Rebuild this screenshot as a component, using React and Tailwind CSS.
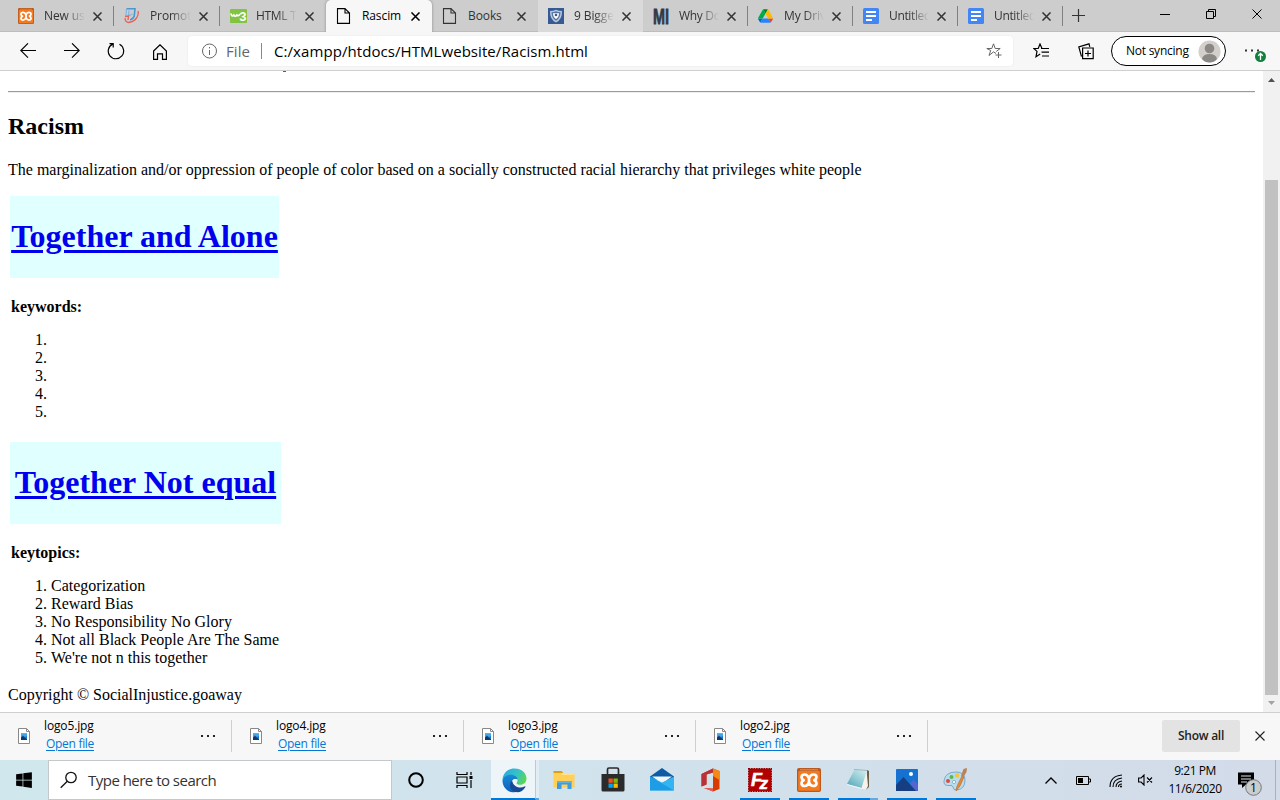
import React from "react";
import { FaWindows } from "react-icons/fa";

const Close = ({ s = 9, w = 1.5, c = "#333" }) => (
  <svg width={s} height={s} viewBox="0 0 10 10" fill="none" stroke={c} strokeWidth={w}>
    <path d="M.5.5l9 9M9.5.5l-9 9" />
  </svg>
);

const PageIcon = ({ c = "#333" }) => (
  <svg width="16" height="16" viewBox="0 0 16 16" fill="none" stroke={c} strokeWidth="1.1">
    <path d="M1.500.6h7.500L13.500 5v10.400h-12zM9 .6V5h4.500" />
  </svg>
);

const Xampp = ({ size }) => (
  <svg width={size} height={size} viewBox="0 0 24 24">
    <rect width="24" height="24" rx="2" fill="#b9591f" />
    <rect x="1.2" y="3" width="21.6" height="19.800" rx="1" fill="#f47a20" />
    <rect x="3" y="1.200" width="18" height="1.200" fill="#d98a58" />
    <path d="M7.800 6.500Q10.500 6.500 12 10.200Q13.500 6.500 16.200 6.500Q19.500 6.500 19.500 9.200Q19.500 11 17.300 12.200Q19.500 13.400 19.500 15.200Q19.500 18 16.200 18Q13.500 18 12 14.200Q10.500 18 7.800 18Q4.500 18 4.500 15.200Q4.500 13.400 6.700 12.200Q4.500 11 4.500 9.200Q4.500 6.500 7.800 6.500zM12 10.200v4" fill="none" stroke="#fff" strokeWidth="2.700" strokeLinejoin="round" />
  </svg>
);

const Promo = () => (
  <svg width="16" height="16" viewBox="0 0 16 16" fill="none">
    <path d="M2.500.8h8.500l-.8 7.500q-.5 2-4 3.700" stroke="#4a97d2" strokeWidth="1.600" />
    <path d="M2.500.8L2 8M5 2.500L4.500 8l4-2" stroke="#7fb6df" strokeWidth="1.200" />
    <path d="M1 10q0 4 3.500 4.500 5-.5 8-4.500 2.500-4 1.500-7M1 8.500l3.500-.5L4 12" stroke="#e8605a" strokeWidth="1.300" />
  </svg>
);

const W3 = () => (
  <svg width="17" height="14" viewBox="0 0 17 14">
    <rect width="17" height="14" rx="1" fill="#82c341" />
    <path d="M.8 4.500q1.200 4 3 1.500 1.300 2.500 3 0 1 1.800 3.200-.800" fill="none" stroke="#fff" strokeWidth="1.700" />
    <text x="9.300" y="11.800" fontFamily="Liberation Sans, sans-serif" fontWeight="700" fontSize="13" fill="#fff">3</text>
  </svg>
);

const Shield = () => (
  <svg width="16" height="16" viewBox="0 0 16 16">
    <rect width="16" height="16" fill="#365a94" />
    <path d="M2 3q3.500 0 6-1.300Q10.500 3 14 3q.3 8.500-6 11.500Q1.700 11.500 2 3z" fill="#b9c8dc" />
    <path d="M3.500 4.300q2.500 0 4.500-1 2 1 4.500 1 0 6-4.500 8.400Q3.500 10.300 3.500 4.300z" fill="#58749f" />
    <path d="M5 5.300h6q0 4-3 5.700-3-1.700-3-5.700z" fill="#fff" />
    <circle cx="8" cy="7" r="1.300" fill="#365a94" />
  </svg>
);

const Mi = () => (
  <svg className="overflow-visible" width="17" height="16" viewBox="0 0 17 16">
    <text x="0" y="15.500" textLength="16" lengthAdjust="spacingAndGlyphs" fontFamily="Liberation Sans Narrow, Liberation Sans, sans-serif" fontWeight="700" fontSize="21.500" fill="#303a49" stroke="#303a49" strokeWidth=".8">MI</text>
  </svg>
);

const Drive = () => (
  <svg width="15" height="14" viewBox="0 0 87.3 78">
    <path d="M6.600 66.850l3.850 6.650c.8 1.400 1.950 2.500 3.300 3.300l13.750-23.800H0c0 1.550.4 3.100 1.200 4.500z" fill="#0066da" />
    <path d="M43.650 25L29.900 1.200c-1.350.8-2.500 1.900-3.300 3.300L1.200 48.500A9 9 0 0 0 0 53h27.500z" fill="#00ac47" />
    <path d="M73.550 76.800c1.350-.8 2.500-1.900 3.300-3.300l1.600-2.750 7.650-13.250c.8-1.400 1.200-2.950 1.200-4.500H59.800l5.850 11.500z" fill="#ea4335" />
    <path d="M43.650 25L57.400 1.200C56.050.4 54.500 0 52.900 0H34.400c-1.600 0-3.150.45-4.500 1.200z" fill="#00832d" />
    <path d="M59.800 53H27.500L13.750 76.800c1.350.8 2.900 1.200 4.500 1.200h50.800c1.600 0 3.150-.45 4.500-1.200z" fill="#2684fc" />
    <path d="M73.400 26.500l-12.700-22c-.8-1.400-1.950-2.500-3.300-3.300L43.650 25 59.800 53h27.450c0-1.550-.4-3.100-1.200-4.500z" fill="#ffba00" />
  </svg>
);

const Docs = () => (
  <svg width="16" height="16" viewBox="0 0 16 16">
    <rect width="16" height="16" rx="1.500" fill="#4285f4" />
    <path d="M3 4h10M3 8h10M3 12h6" stroke="#fff" strokeWidth="1.800" />
  </svg>
);

const tabs = [
  { t: "New us", i: <Xampp size={16} />, fade: true, sep: true },
  { t: "Promot", i: <Promo />, fade: true, sep: true },
  { t: "HTML T", i: <W3 />, fade: true },
  { t: "Rascim", i: <PageIcon c="#000" />, active: true },
  { t: "Books", i: <PageIcon /> },
  { t: "9 Bigge", i: <Shield />, fade: true, hover: true },
  { t: "Why Do", i: <Mi />, fade: true, sep: true },
  { t: "My Driv", i: <Drive />, fade: true, sep: true },
  { t: "Untitled", i: <Docs />, fade: true, sep: true },
  { t: "Untitled", i: <Docs />, fade: true, sep: true },
];

function Tab({ tab, wide }) {
  const bg = tab.active ? "bg-[#f7f7f7] rounded-t-[5px] shadow-[0_0_3px_rgba(0,0,0,0.35)] z-10 text-black" : tab.hover ? "bg-[#dadada] text-[#333]" : "text-[#333]";
  return (
    <div className={"relative flex h-8 shrink-0 items-center pl-[10px] " + (wide ? "w-[106px] " : "w-[105px] ") + bg}>
      <span className="flex w-[26px] shrink-0 items-center">{tab.i}</span>
      <span className={"whitespace-nowrap text-[12px] leading-4 " + (wide ? "w-[41px] " : "w-[40px] ") + (tab.t === "Untitled" ? "tracking-[-0.350px] " : tab.t === "HTML T" || tab.t === "Why Do" ? "tracking-[-0.300px] " : "tracking-[-0.100px] ") + (tab.fade ? "[mask-image:linear-gradient(to_right,black_50%,transparent_100%)]" : "")}>{tab.t}</span>
      <span className="ml-[8px] flex"><Close s={9} w={1.700} c={tab.active ? "#000" : "#333"} /></span>
      <span className={"ml-auto h-5 w-px " + (tab.sep ? "bg-[#808080]" : "")} />
    </div>
  );
}

function Tabs() {
  return (
    <div className="flex h-8 shrink-0 items-start overflow-hidden bg-[#cdcdcd] pl-2 shadow-[inset_0_-1px_0_#bdbdbd]">
      {tabs.map((t, i) => <Tab key={i} tab={t} wide={i < 5} />)}
      <svg className="ml-[9px] mt-[9px]" width="13" height="13" viewBox="0 0 13 13" stroke="#333" strokeWidth="1.200"><path d="M0 6.500h13M6.500 0v13" /></svg>
      <svg className="ml-[75px] mt-[14px]" width="10" height="1"><rect width="10" height="1" fill="#000" /></svg>
      <svg className="ml-[36px] mt-[9px]" width="10" height="10" viewBox="0 0 10 10" fill="none" stroke="#000"><path d="M.5 2.500h7v7h-7zM2.500 2.500v-2h7v7h-2" /></svg>
      <span className="ml-[36px] mt-[9px]"><Close s={10} w={1} c="#000" /></span>
    </div>
  );
}

function Toolbar() {
  return (
    <div className="flex h-[39px] shrink-0 items-center border-b border-[#cfcfcf] bg-[#f7f7f7]">
      <svg className="ml-5" width="16" height="16" viewBox="0 0 16 16" fill="none" stroke="#000" strokeWidth="1.100"><path d="M16 7.500H.8M8 .3L.8 7.500 8 14.700" /></svg>
      <svg className="ml-[28px]" width="16" height="16" viewBox="0 0 16 16" fill="none" stroke="#000" strokeWidth="1.100"><path d="M0 7.500h15.200M8 .3l7.200 7.200L8 14.700" /></svg>
      <svg className="ml-[27px]" width="18" height="18" viewBox="0 0 18 18" fill="none" stroke="#000" strokeWidth="1.200"><path d="M12.500 2.200A7.700 7.700 0 1 1 5.600 2.100M2.500 1.600h3.700v3.900" /></svg>
      <svg className="ml-[28px] mt-px" width="14" height="16" viewBox="0 0 14 16" fill="none" stroke="#000" strokeWidth="1.200"><path d="M.6 7L7 .8 13.400 7v8.400H9.500v-5.600h-5v5.600H.6z" /></svg>
      <div className="ml-[21px] flex h-[30px] w-[825px] items-center rounded-[4px] bg-white pl-[14px] shadow-[0_0_2px_rgba(0,0,0,0.08)]">
        <svg className="-mt-px" width="16" height="16" viewBox="0 0 16 16" fill="none" stroke="#666"><circle cx="7.500" cy="8" r="7" /><path d="M7.500 7v5M7.500 4v1.400" /></svg>
        <span className="ml-2 w-[35px] text-[15px] text-[#666] tracking-[0.100px]">File</span>
        <span className="h-4 w-px bg-[#888]" />
        <span className="ml-[12px] w-[320px] whitespace-nowrap text-[15px] tracking-[0.070px] text-black">C:/xampp/htdocs/HTMLwebsite/Racism.html</span>
        <svg className="ml-auto mr-[10px]" width="17" height="16" viewBox="0 0 17 16" fill="none" stroke="#666"><path d="M10 10.500l-2.500-1.600L3 12.500l1.700-5L.8 5.500h5L7.500.8l1.700 4.700h5l-4 3M12.500 9v6M9.500 12h6" /></svg>
      </div>
      <svg className="ml-[20px]" width="17" height="16" viewBox="0 0 17 16" fill="none" stroke="#000" strokeWidth="1.200"><path d="M9 5.500L7 1 5.200 5.500H.8L4 8.400 3 13.700l4.200-2.600M8 5.500h8M8.500 9.200h7.500M9 13h7" /></svg>
      <svg className="ml-[28px]" width="16" height="17" viewBox="0 0 16 17" fill="none" stroke="#000" strokeWidth="1.200"><path d="M4.600 5h10.600v10.600H4.600zM10 7.500v6M7 10.500h6M3.500 13.500L.8 3.800 11 .8l.8 3" /></svg>
      <div className="ml-[17px] flex h-[30px] w-[115px] items-center rounded-full border border-black bg-white pl-[14px]">
        <span className="w-[72px] whitespace-nowrap text-[12px] tracking-[-0.250px] text-black">Not syncing</span>
        <svg className="shrink-0" width="23" height="23" viewBox="0 0 23 23"><circle cx="11.500" cy="11.500" r="11" fill="#d3d0cc" /><circle cx="11.500" cy="8.500" r="4.800" fill="#8b8785" /><path d="M4 19q1-5 7.500-5t7.500 5q-3 3.500-7.500 3.500T4 19z" fill="#8b8785" /></svg>
      </div>
      <svg className="ml-[18px]" width="23" height="24" viewBox="0 0 23 24"><path d="M1 10.500h2v2H1zM7 10.500h2v2H7zM13 10.500h2v2h-2z" fill="#333" /><circle cx="16.500" cy="17.500" r="5.500" fill="#15803d" /><path d="M16.500 21v-6.300M14.200 16.700l2.300-2.200 2.300 2.200" stroke="#fff" strokeWidth="1.300" fill="none" /></svg>
    </div>
  );
}

function Topic({ title, label, items, wide }) {
  return (
    <section className="ml-[2px]">
      <div className={"flex h-[82px] justify-center bg-[#e0ffff] pt-[22px] " + (wide ? "w-[271px]" : "w-[269px]")}>
        <h1 className="whitespace-nowrap text-[32px] leading-[37px] font-bold text-[#0000ee] underline decoration-[3px] underline-offset-[3px]">{title}</h1>
      </div>
      <p className="mt-5 mb-[15px] ml-px leading-[18px] font-bold">{label}</p>
      <ol className="ml-[41px] list-decimal leading-[18px]">
        {items.map((t, i) => <li key={i} className="h-[18px]">{t}</li>)}
      </ol>
    </section>
  );
}

function Page() {
  return (
    <div className="flex h-[641px] shrink-0 overflow-hidden bg-white">
      <main className="w-[1263px] pl-2 text-[16px] text-black [font-family:'Liberation_Serif',serif]">
        <div className="ml-[275px] h-px w-[3px] bg-[#6a4c93]" />
        <hr className="mt-[19px] h-[2px] w-[1247px] border-t border-b border-t-[#9a9a9a] border-b-[#eeeeee]" />
        <h2 className="mt-[19px] text-[24px] leading-[28px] font-bold">Racism</h2>
        <p className="mt-[21px] mb-[17px] whitespace-nowrap leading-[18px]">The marginalization and/or oppression of people of color based on a socially constructed racial hierarchy that privileges white people</p>
        <Topic title="Together and Alone" label="keywords:" items={["", "", "", "", ""]} />
        <div className="h-[21px]" />
        <Topic wide title="Together Not equal" label="keytopics:" items={["Categorization", "Reward Bias", "No Responsibility No Glory", "Not all Black People Are The Same", "We're not n this together"]} />
        <p className="mt-[19px] leading-[18px]">Copyright © SocialInjustice.goaway</p>
      </main>
      <div className="flex w-[17px] flex-col items-center bg-[#f1f1f1]">
        <svg className="mt-[7px]" width="7" height="4"><path d="M0 4h7L3.500 0z" fill="#505050" /></svg>
        <div className="mt-[98px] h-[515px] w-[13px] bg-[#c1c1c1]" />
        <svg className="mt-[6px]" width="7" height="4"><path d="M0 0h7L3.500 4z" fill="#a3a3a3" /></svg>
      </div>
    </div>
  );
}

function Download({ name }) {
  return (
    <div className="flex h-full w-[232px] items-center pl-[18px]">
      <svg className="-mt-px" width="12" height="16" viewBox="0 0 12 16"><path d="M.5.5h8l3 3v12H.5z" fill="#fff" stroke="#888" /><path d="M8.500.5v3h3" fill="none" stroke="#888" /><path d="M3 5.500h6V12H3z" fill="#1976c9" /><path d="M3 12V9.500L5 8l4 3.500v.5z" fill="#12366d" /><path d="M3 5.500h6V8L7 9 5 7.500 3 9z" fill="#43a5e8" /></svg>
      <div className="ml-[14px] flex h-full w-[120px] flex-col pt-[4px] text-[12px]">
        <span className="leading-[18px] tracking-[-0.140px] text-black">{name}</span>
        <span className="ml-[2px] leading-[18px] tracking-[-0.300px] text-[#0078d7] underline underline-offset-2">Open file</span>
      </div>
      <svg className="-mt-px ml-[37px]" width="14" height="2" fill="#222"><path d="M0 0h2v2H0zM6 0h2v2H6zM12 0h2v2h-2z" /></svg>
      <span className="-mt-px ml-auto h-8 w-px bg-[#cfcfcf]" />
    </div>
  );
}

function Downloads() {
  return (
    <div className="flex h-12 shrink-0 items-center border-t border-[#cfcfcf] bg-[#f7f7f7]">
      {["logo5.jpg", "logo4.jpg", "logo3.jpg", "logo2.jpg"].map((n) => <Download key={n} name={n} />)}
      <div className="-mt-px ml-auto flex h-8 w-[78px] items-center justify-center rounded-[2px] bg-[#e3e3e3] text-[12px] font-semibold tracking-[-0.250px] text-[#222]">Show all</div>
      <span className="-mt-px mr-[15px] ml-[15px] flex"><Close s={10} w={1.100} c="#222" /></span>
    </div>
  );
}

const Edge = () => (
  <svg width="25" height="25" viewBox="0 0 26 26">
    <defs>
      <linearGradient id="eg" x1="0" x2="1" y1=".2" y2=".6"><stop stopColor="#2aa8e0" /><stop offset=".55" stopColor="#35c1c9" /><stop offset="1" stopColor="#5bd84f" /></linearGradient>
      <linearGradient id="eb" x1="0" x2="0" y1="0" y2="1"><stop stopColor="#168bd6" /><stop offset="1" stopColor="#0b5fbc" /></linearGradient>
    </defs>
    <path d="M.5 12.500C1 5 6 .5 13 .5c7.500 0 12.500 5 12.500 10.500 0 4-3 6.500-6.500 6.500-3 0-5-1-3.800-2.500C17 12 14 8.500 9 8.500c-4 0-7 1.500-8.500 4z" fill="url(#eg)" />
    <path d="M.5 13C1.500 9.500 5 7 9 7c4.500 0 7 2.500 7.300 5-2.500-1.300-4.500-.5-5.500 1-1.800 2.800-.8 7 2.200 9.500 1.500 1.300 3 1.800 4 2C9 27.500.5 22 .5 13z" fill="url(#eb)" />
    <path d="M10.800 13c-3.300 2-3.500 7.500.2 10.500 4.500 3.300 10.500 1.500 13.200-3.500.5-.8-.2-1.200-.8-.8-3 1.700-7.400 1.500-10-1-1.800-1.500-2.600-3.200-2.600-5.200z" fill="#174a96" />
    <path d="M10.800 13.200c1.200-1.800 3.200-2.200 5.400-1.200.2 1.200-.2 2.200-1 3-.8 1 .2 2 2 2.400-2.500 1.200-5 .5-6.400-4.200z" fill="#edf5f9" />
  </svg>
);

const Folder = () => (
  <svg width="22" height="20" viewBox="0 0 22 20"><path d="M.5 1h8l2 2H.5z" fill="#dba114" /><path d="M.5 3h21v14.500H.5z" fill="#ffcf58" /><path d="M9 3h12.500v2H8z" fill="#ffe08c" /><path d="M4 19v-8h14.500v8h-4v-4.500h-6V19z" fill="#3d9be0" /><path d="M4 11h14.500v2H4z" fill="#5cb1ea" /></svg>
);
const Store = () => (
  <svg className="-mt-px" width="24" height="25" viewBox="0 0 24 25"><path d="M6.500 8V2.500q0-1.500 1.500-1.500h8q1.500 0 1.500 1.500V8" fill="none" stroke="#2b2b2b" strokeWidth="1.700" /><path d="M.5 7h23v16q0 1.500-1.500 1.500H2Q.5 24.500.5 23z" fill="#2b2b2b" /><path d="M7.500 11.500h4.300v4.300H7.500z" fill="#f25022" /><path d="M12.500 11.500h4.300v4.300h-4.300z" fill="#7fba00" /><path d="M7.500 16.500h4.300v4.300H7.500z" fill="#00a4ef" /><path d="M12.500 16.500h4.300v4.300h-4.300z" fill="#ffb900" /></svg>
);
const Mail = () => (
  <svg className="-mt-px" width="24" height="23" viewBox="0 0 24 23"><path d="M0 8.500L12 0l12 8.500V12H0z" fill="#0d5aa7" /><path d="M2 8.500h20l-10 7z" fill="#f2f5f8" /><path d="M0 8.500l12 6 12-6V22.500H0z" fill="#32b5f0" /><path d="M0 8.500v14h24z" fill="#1493df" opacity=".7" /></svg>
);
const Office = () => (
  <svg width="19" height="24" viewBox="0 0 19 24"><path d="M.5 6L12 .5 18.500 3v18L12 23.500 3 20l9 .5V4.500L5.500 6.500v10L.5 18.500z" fill="#d83b01" /><path d="M.5 6L12 .5V4.500L5.500 6.500v10L.5 18.500z" fill="#ba3038" /><path d="M12 .5L18.500 3v9L12 8z" fill="#f48a15" /><path d="M3 20l9 .5v3z" fill="#e75c61" /></svg>
);
const Filezilla = () => (
  <svg width="24" height="24" viewBox="0 0 24 24"><rect x=".6" y=".6" width="22.800" height="22.800" fill="#b30000" stroke="#8e0000" strokeWidth="1.200" strokeDasharray="1.500 1" /><g fill="#fff" stroke="#fff" strokeWidth=".6" fontFamily="Liberation Sans, sans-serif" fontWeight="700" fontStyle="italic"><text x="3" y="17.500" fontSize="18">F</text><text x="11.500" y="21" fontSize="17">z</text></g></svg>
);
const Notepad = () => (
  <svg width="24" height="24" viewBox="0 0 24 24">
    <defs><linearGradient id="np" x1="0" x2=".8" y1="1" y2="0"><stop stopColor="#4d9fb0" /><stop offset=".5" stopColor="#8cc9d3" /><stop offset="1" stopColor="#cde9ec" /></linearGradient></defs>
    <path d="M21 2l2 1v16l-3 2.500z" fill="#6b5f47" />
    <path d="M20.500 2.500L22 18l-2 3.500-5-1z" fill="#f5f3ec" />
    <path d="M8.500 1.500l12.500 1L15.500 20 1 16z" fill="url(#np)" />
    <path d="M1 16l14.500 4 .5 1.200L1.200 17z" fill="#edf7f8" />
    <path d="M8.500 1.500l12.500 1" stroke="#748d94" strokeDasharray="1 1" />
  </svg>
);
const Photos = () => (
  <svg width="22" height="22" viewBox="0 0 22 22"><rect width="22" height="22" rx="1" fill="#1672d0" /><path d="M14 14.500l3.500-4 4.500 5V22h-5z" fill="#5465cf" /><path d="M0 16l7.500-8L20 22H0z" fill="#153f82" /><circle cx="15" cy="5" r="2" fill="#fff" /></svg>
);
const Paint = () => (
  <svg width="25" height="24" viewBox="0 0 25 24"><path d="M1 13Q2 4 13 4q9 0 9 8 0 9-8 10-4 .5-4-3 0-2-4-1.500-5.500.5-5-4.500z" fill="#b8ddef" stroke="#6b9ebd" strokeWidth=".8" /><circle cx="5" cy="13" r="2" fill="#e0483e" /><circle cx="8.500" cy="9" r="2" fill="#5cb848" /><circle cx="14" cy="7.500" r="2.200" fill="#f4c63b" /><circle cx="11" cy="14" r="1.600" fill="#fff" stroke="#6b9ebd" strokeWidth=".7" /><path d="M13 23q0-3 2-7l4-8 2 1-4 9z" fill="#e48a37" stroke="#b8672c" strokeWidth=".6" /><path d="M18 8l2.500-7 3.500-1-.5 4-3 5z" fill="#b88356" /></svg>
);

const apps = [
  { i: <Folder /> }, { i: <Store /> }, { i: <Mail /> }, { i: <Office /> },
  { i: <Filezilla />, on: true }, { i: <Xampp size={24} />, on: true },
  { i: <Notepad />, on: true, more: true }, { i: <Photos />, on: true }, { i: <Paint />, on: true },
];

function Taskbar() {
  return (
    <div className="flex h-10 shrink-0 items-center bg-linear-to-r from-[#cfe7ed] via-[#d1e2ec] to-[#d3dbe9]">
      <div className="flex w-12 justify-center text-black"><FaWindows size={18} /></div>
      <div className="flex h-10 w-[344px] items-center border border-[#c3c8ca] bg-white pl-[11px]">
        <svg className="-mt-px" width="18" height="18" viewBox="0 0 18 18" fill="none" stroke="#111" strokeWidth="1.300"><circle cx="11" cy="6.500" r="5.200" /><path d="M7.300 10.200L.7 16.800" /></svg>
        <span className="ml-[10px] text-[15px] tracking-[-0.520px] text-[#333]">Type here to search</span>
      </div>
      <div className="flex w-12 justify-center"><svg width="16" height="16" viewBox="0 0 16 16"><circle cx="8" cy="8" r="6.800" fill="none" stroke="#000" strokeWidth="2" /></svg></div>
      <div className="flex w-12 justify-center"><svg width="17" height="16" viewBox="0 0 17 16" fill="none" stroke="#000" strokeWidth="1.200"><path d="M1 0v2.500h10V0M1 16v-2.500h10V16M1 5h10v6H1zM15 0v3M15 8v8" /><path d="M13.500 4h3v3h-3z" fill="#000" stroke="none" /></svg></div>
      <div className="ml-[3px] flex h-10 w-12">
        <div className="flex w-[45px] items-center justify-center border-r border-b-2 border-r-[#b9ccd6] border-b-[#0078d7] bg-[#edf5f9] pt-[2px] pl-[3px]"><Edge /></div>
        <div className="w-[3px] border-b-2 border-[#5ba5de] bg-[#e0edf4]" />
      </div>
      {apps.map((a, i) => (
        <div key={i} className="flex h-10 w-[49px] flex-col items-center">
          <div className="flex h-[38px] items-center pt-[2px]">{a.i}</div>
          {a.on && <div className="flex h-[2px] w-10 bg-[#0078d7]">{a.more && <span className="ml-auto w-2 bg-[#66a9df]" />}</div>}
        </div>
      ))}
      <svg className="ml-[65px]" width="12" height="7" viewBox="0 0 12 7" fill="none" stroke="#000" strokeWidth="1.300"><path d="M.5 6.500L6 1l5.500 5.500" /></svg>
      <svg className="ml-[19px]" width="15" height="9" viewBox="0 0 15 9"><path d="M.5.5h12v8H.5zM13 3h1.500v3H13" fill="none" stroke="#000" /><path d="M2 2h5v5H2z" /></svg>
      <svg className="ml-[18px] mt-[2px]" width="14" height="14" viewBox="0 0 14 14" fill="none" stroke="#000" strokeWidth="1.100"><path d="M1 13Q1 2 13 1M4 13Q4 5 13 4M7 13Q7 8 13 7M9.500 13q0-3 3.500-3" /><circle cx="12" cy="12.500" r="1" fill="#000" stroke="none" /></svg>
      <svg className="ml-[15px]" width="15" height="12" viewBox="0 0 15 12" fill="none" stroke="#000" strokeWidth="1.100"><path d="M.6 4h2.500L6 1v10L3.100 8H.6zM9 3.500l5 5M14 3.500l-5 5" /></svg>
      <div className="ml-[12px] flex w-[60px] flex-col items-center text-[12px] leading-[18px] tracking-[-0.450px] whitespace-nowrap text-black"><span>9:21 PM</span><span className="tracking-[-0.400px]">11/6/2020</span></div>
      <svg className="ml-[13px] mt-[8px]" width="25" height="25" viewBox="0 0 25 25"><path d="M0 .5h16v12H8L4 16v-3.500H0z" /><path d="M3 4h10M3 7h10M3 10h6" stroke="#dbe3ec" strokeWidth="1.100" /><circle cx="15.500" cy="15.500" r="7.800" fill="#cbcccd" stroke="#777" /><text x="15.500" y="19.700" textAnchor="middle" fontSize="12" fontFamily="Open Sans, sans-serif">1</text></svg>
      <span className="ml-auto mr-[4px] h-10 w-px bg-[#a8b0bb]" />
    </div>
  );
}

export default function App() {
  return (
    <div className="flex h-[800px] w-[1280px] flex-col overflow-hidden bg-white [font-family:'Open_Sans','Noto_Sans',sans-serif]">
      <Tabs />
      <Toolbar />
      <Page />
      <Downloads />
      <Taskbar />
    </div>
  );
}
